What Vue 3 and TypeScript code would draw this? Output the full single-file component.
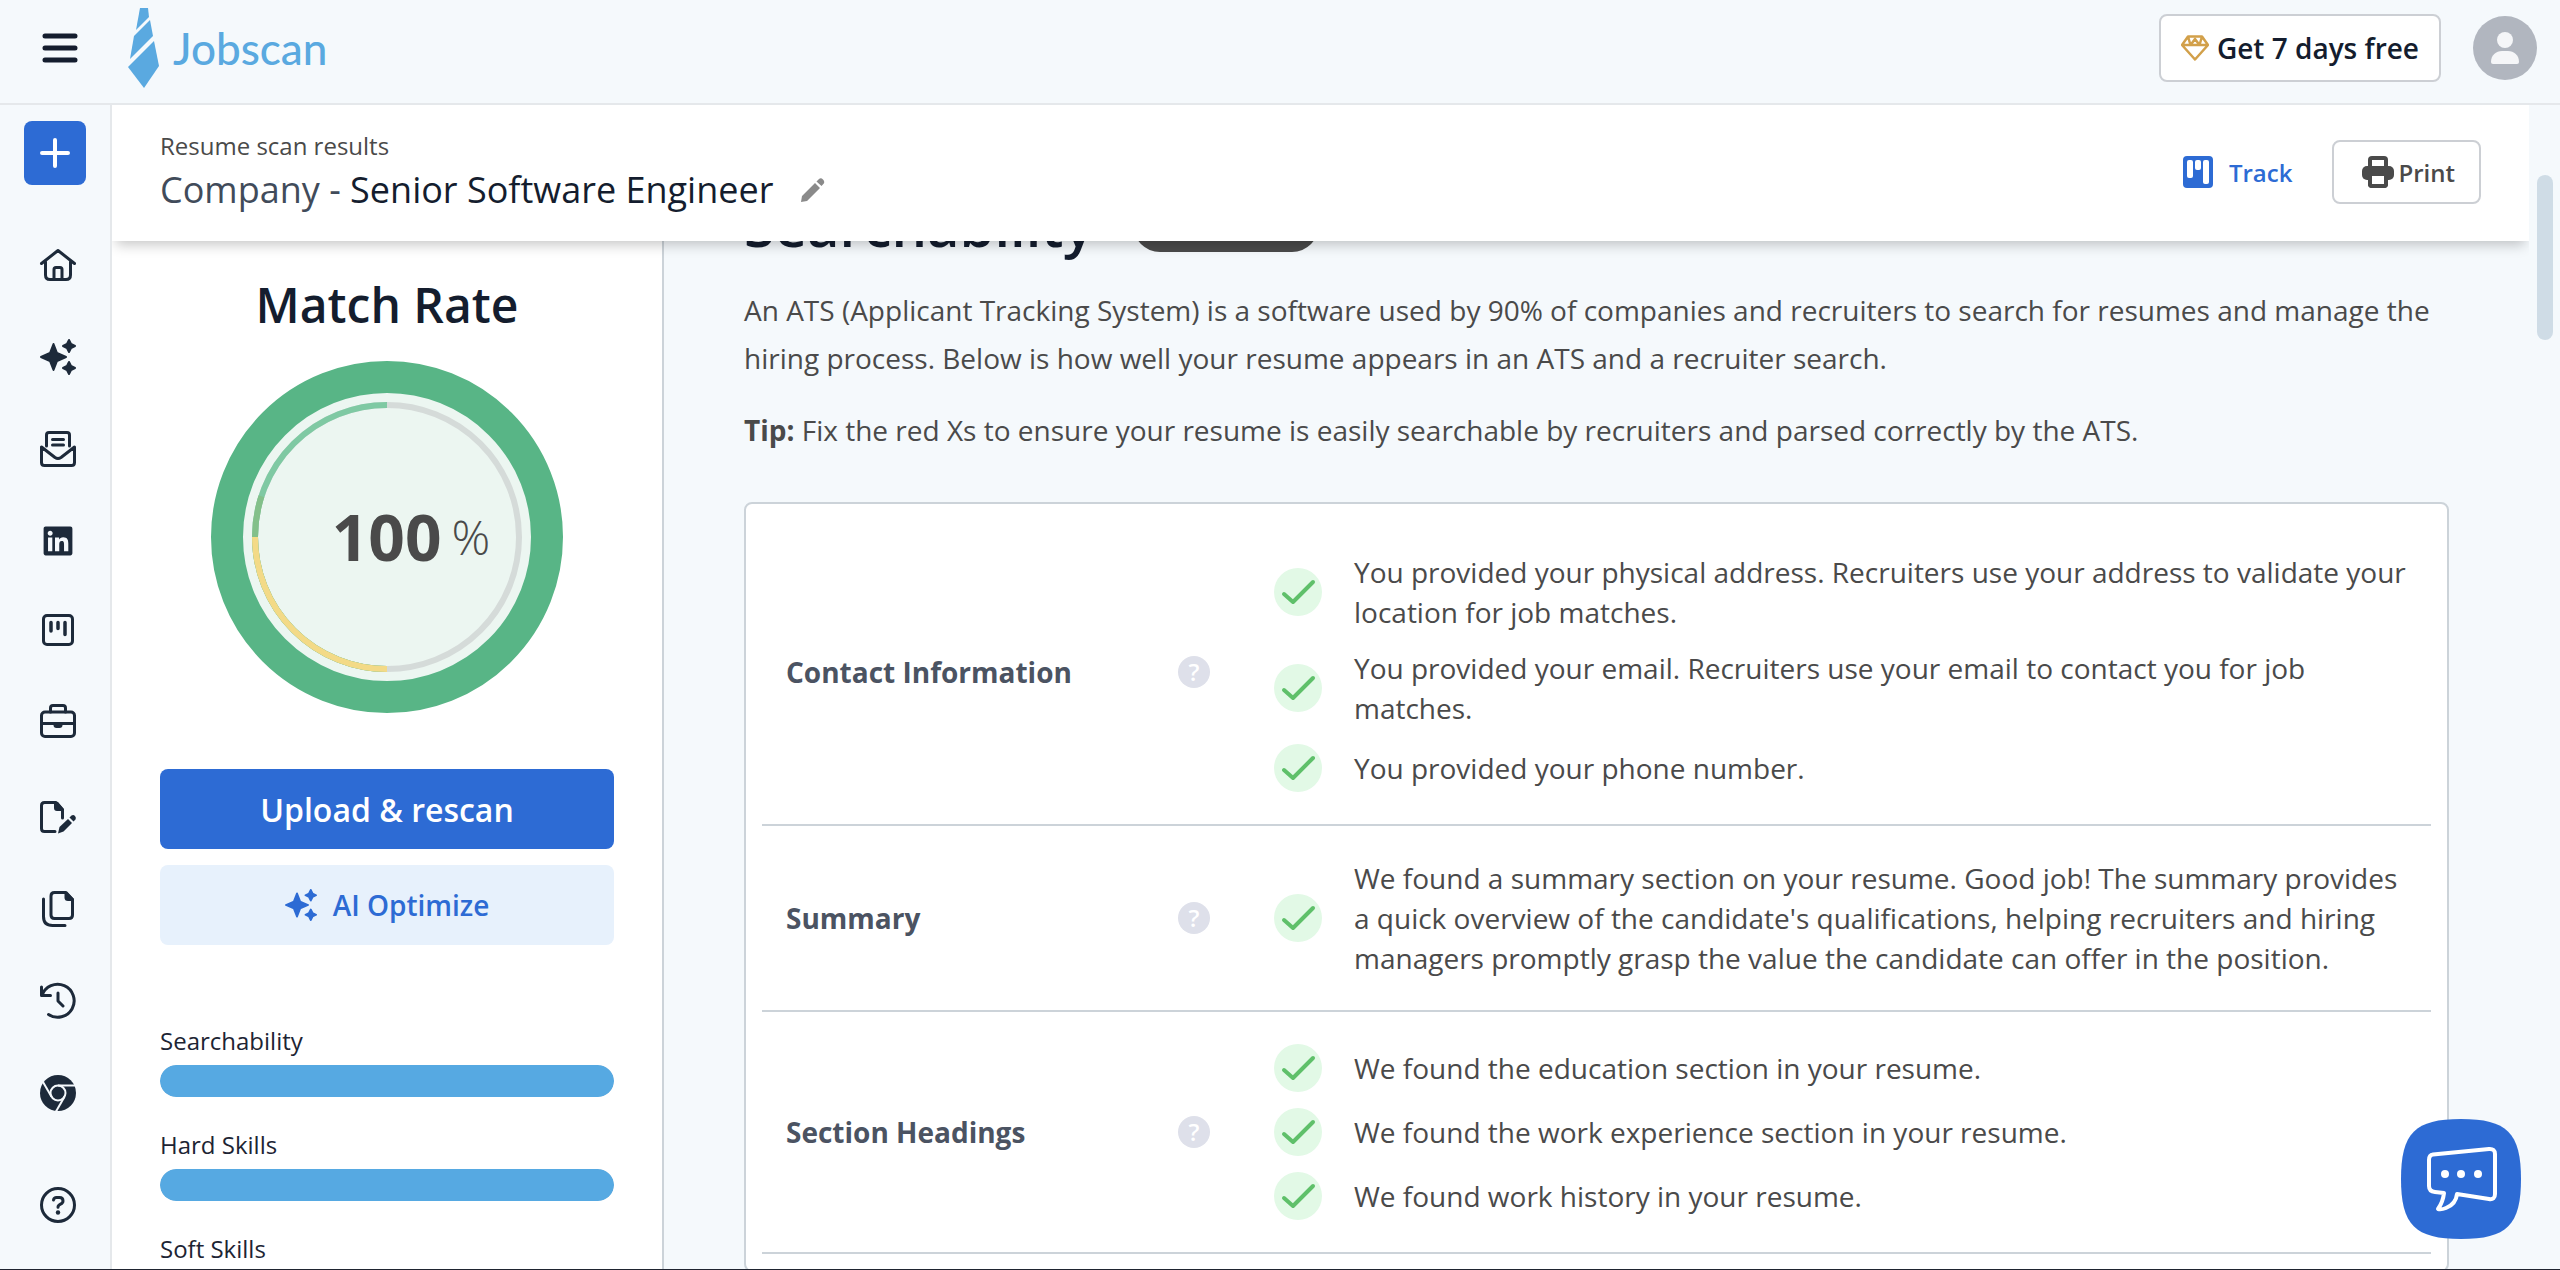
<script setup lang="ts">
interface Section {
  title: string
  findings: string[]
}

interface Skill {
  name: string
  score: number
}

const sections: Section[] = [
  {
    title: 'Contact Information',
    findings: [
      'You provided your physical address. Recruiters use your address to validate your location for job matches.',
      'You provided your email. Recruiters use your email to contact you for job matches.',
      'You provided your phone number.',
    ],
  },
  {
    title: 'Summary',
    findings: [
      "We found a summary section on your resume. Good job! The summary provides a quick overview of the candidate's qualifications, helping recruiters and hiring managers promptly grasp the value the candidate can offer in the position.",
    ],
  },
  {
    title: 'Section Headings',
    findings: [
      'We found the education section in your resume.',
      'We found the work experience section in your resume.',
      'We found work history in your resume.',
    ],
  },
]

const skills: Skill[] = [
  { name: 'Searchability', score: 100 },
  { name: 'Hard Skills', score: 100 },
  { name: 'Soft Skills', score: 100 },
]
</script>

<template>
  <div class="app">
    <header class="topbar">
      <button class="menu" type="button" aria-label="Menu">
        <svg width="36" height="32" viewBox="0 0 36 32"><path d="M3 4h30M3 16h30M3 28h30" stroke="#141d2e" stroke-width="5" stroke-linecap="round" /></svg>
      </button>
      <a class="brand" href="#">
        <svg width="32" height="80" viewBox="0 0 32 80" fill="#5aa9e0">
          <path d="M12 0h8l1 9L8 22z" />
          <path d="M22 12l3 16L2 51 6 28z" />
          <path d="M26 33l5 25-15 22L0 59z" />
        </svg>
        <span>Jobscan</span>
      </a>
      <button class="trial" type="button">
        <svg width="28" height="26" viewBox="0 0 28 26" fill="none" stroke="#d2a04a" stroke-width="2.500" stroke-linejoin="round"><path d="M7 1.500h14l6 8.500-13 14.500L1 10zM1 10h26M7 1.500L9.500 10 14 4l4.500 6L21 1.500" /></svg>
        Get 7 days free
      </button>
      <button class="avatar" type="button" aria-label="Account">
        <svg width="64" height="64" viewBox="0 0 64 64"><circle cx="32" cy="32" r="32" fill="#b1b6bf" /><circle cx="32" cy="24" r="8" fill="#f5f6f8" /><path d="M18 46c0-7 5-11 11-11h6c6 0 11 4 11 11q0 2-2 2H20q-2 0-2-2z" fill="#f5f6f8" /></svg>
      </button>
    </header>

    <div class="body">
      <nav class="rail" aria-label="Main">
        <button class="new-scan" type="button" aria-label="New scan">
          <svg width="32" height="32" viewBox="0 0 32 32"><path d="M16 3v26M3 16h26" stroke="#fff" stroke-width="4" stroke-linecap="round" /></svg>
        </button>
        <a href="#" aria-label="Home">
          <svg viewBox="0 0 36 36"><path d="M1.500 16.500L18 3.500l16.500 13M5.500 14.500V28q0 4.500 4.500 4.500h16q4.500 0 4.500-4.500V14.500M14 32V22.500q0-2 2-2h4q2 0 2 2V32" /></svg>
        </a>
        <a href="#" aria-label="Optimize">
          <svg viewBox="0 0 36 36"><path class="solid" d="M13.500 5l3.500 9 9 4-9 4-3.500 9L10 22l-9-4 9-4zM29 1l2 4 4 2-4 2-2 4-2-4-4-2 4-2zM29 23l2 4 4 2-4 2-2 4-2-4-4-2 4-2z" /></svg>
        </a>
        <a href="#" aria-label="Cover letter">
          <svg viewBox="0 0 36 36"><path d="M6.500 15V4q0-2.500 2.500-2.500h18q2.500 0 2.500 2.500v11M12.500 8.500h11M12.500 14h11M1.500 16v15.500q0 3 3 3h27q3 0 3-3V16L21 26.500q-3 2-6 0z" /></svg>
        </a>
        <a href="#" aria-label="LinkedIn">
          <svg viewBox="-32 -24 512 560"><path class="plain" d="M416 32H31.900C14.300 32 0 46.500 0 64.300v383.400C0 465.500 14.300 480 31.900 480H416c17.600 0 32-14.500 32-32.300V64.300c0-17.800-14.400-32.300-32-32.300zM135.400 416H69V202.200h66.500V416zm-33.200-243c-21.300 0-38.500-17.300-38.500-38.500S80.900 96 102.200 96c21.200 0 38.500 17.300 38.500 38.500 0 21.300-17.200 38.500-38.500 38.500zm282.100 243h-66.400V312c0-24.800-.5-56.700-34.500-56.700-34.600 0-39.900 27-39.900 54.900V416h-66.400V202.200h63.700v29.200h.9c8.900-16.800 30.600-34.500 62.900-34.500 67.200 0 79.700 44.300 79.700 101.900V416z" /></svg>
        </a>
        <a href="#" aria-label="Job tracker">
          <svg viewBox="0 0 36 36"><rect x="3.500" y="0.500" width="29" height="29" rx="3.500" /><path d="M11 7.500v8.500M18 7.500v6M25 7.500v12" stroke-width="3.500" /></svg>
        </a>
        <a href="#" aria-label="Jobs">
          <svg viewBox="0 0 36 36"><rect x="1.500" y="5" width="33" height="24.500" rx="3.500" /><path d="M10.500 5V1q0-2.500 2.500-2.500h10q2.500 0 2.500 2.500v4M1.500 16.500h33" /><path class="plain" d="M13.500 16h9v2q0 3-3 3h-3q-3 0-3-3z" /></svg>
        </a>
        <a href="#" aria-label="Resume editor">
          <svg viewBox="0 0 36 36"><path d="M22.500 19v-8L16 3.500H4.500q-3 0-3 3v23q0 3 3 3H15" /><path class="plain" d="M14 3h4l6 7v2h-7q-3 0-3-3zM18 34.500l1.500-6.500 8.500-8 4 4-8.500 8.500zM29.500 18.500l2-2q2-1 3.500.5t.5 3.500l-2 2z" /></svg>
        </a>
        <a href="#" aria-label="Resumes">
          <svg viewBox="0 0 36 36"><path d="M11 5q0-3.500 3.500-3.500H26l6.500 7V24q0 3.500-3.500 3.500H14.500Q11 27.500 11 24zM3.500 8v17.500q0 9 9 9H25" /><path class="plain" d="M24.500 1H27l7 7v2h-6q-3.500 0-3.500-3.500z" /></svg>
        </a>
        <a href="#" aria-label="Scan history">
          <svg viewBox="0 0 36 36"><path d="M2 12.500A16.500 16.500 0 1 1 8.500 31.500M1.500 4v8.500h9M18 10v8l5 5" /></svg>
        </a>
        <a href="#" aria-label="Chrome extension">
          <svg viewBox="0 0 36 36">
            <circle class="plain" cx="18" cy="18" r="18" />
            <g class="gap">
              <circle cx="18" cy="18" r="7.500" />
              <path d="M18 10.500h17" />
              <path d="M18 10.500h17" transform="rotate(120 18 18)" />
              <path d="M18 10.500h17" transform="rotate(240 18 18)" />
            </g>
          </svg>
        </a>
        <a class="help" href="#" aria-label="Help">
          <svg viewBox="0 0 36 36"><circle cx="18" cy="18" r="16.500" /><path d="M13.500 13q.5-2.500 3-2.500h3q3.500 0 3.500 3.500 0 2-2.500 3.200-2.500 1.300-2.500 3" /><circle class="plain" cx="18" cy="25.500" r="2.200" /></svg>
        </a>
      </nav>

      <div class="page">
        <div class="subheader">
          <div class="heading">
            <p class="kicker">Resume scan results</p>
            <div class="job">
              <h1><span>Company - </span>Senior Software Engineer</h1>
              <button class="edit" type="button" aria-label="Edit title">
                <svg width="24" height="24" viewBox="0 0 24 24" fill="#8a8a8a"><path d="M0 24l1-6L14 5l5 5L6 23zM15.500 3.500L18 1q2-1.500 4 .5t.8 4L20.500 8z" /></svg>
              </button>
            </div>
          </div>
          <a class="track" href="#">
            <svg width="30" height="32" viewBox="0 0 30 32"><rect width="30" height="32" rx="4" fill="#2d6bd4" /><g fill="#fff"><rect x="4" y="4" width="6" height="18" rx="2" /><rect x="12" y="4" width="6" height="10" rx="2" /><rect x="20" y="4" width="6" height="24" rx="2" /></g></svg>
            Track
          </a>
          <button class="print" type="button">
            <svg width="32" height="32" viewBox="0 0 32 32"><rect x="6" width="20" height="32" rx="4" fill="#4a4a4a" /><rect x="10" y="4" width="12" height="8" fill="#fff" /><rect y="10" width="32" height="14" rx="5" fill="#4a4a4a" /><rect x="6" y="18" width="20" height="14" rx="4" fill="#4a4a4a" /><rect x="10" y="20" width="12" height="8" fill="#fff" /></svg>
            Print
          </button>
        </div>

        <div class="columns">
          <aside class="match">
            <h2>Match Rate</h2>
            <div class="gauge">
              <svg width="352" height="352" viewBox="0 0 352 352" fill="none">
                <circle cx="176" cy="176" r="160" fill="#ecf6f1" stroke="#58b586" stroke-width="32" />
                <circle cx="176" cy="176" r="132" stroke="#d5dbd9" stroke-width="6" />
                <g stroke-width="6" transform="rotate(90 176 176)">
                  <circle cx="176" cy="176" r="132" stroke="#7fc9a3" pathLength="100" stroke-dasharray="50 50" />
                  <circle cx="176" cy="176" r="132" stroke="#83c08a" pathLength="100" stroke-dasharray="30 70" />
                  <circle cx="176" cy="176" r="132" stroke="#f3da87" pathLength="100" stroke-dasharray="25 75" />
                </g>
              </svg>
              <p class="rate"><b>100</b><span>%</span></p>
            </div>
            <button class="upload" type="button">Upload &amp; rescan</button>
            <button class="optimize" type="button">
              <svg width="32" height="32" viewBox="0 0 36 36" fill="#2d6bd4" stroke="#2d6bd4" stroke-width="2" stroke-linejoin="round"><path d="M13.500 5l3.500 9 9 4-9 4-3.500 9L10 22l-9-4 9-4zM29 1l2 4 4 2-4 2-2 4-2-4-4-2 4-2zM29 23l2 4 4 2-4 2-2 4-2-4-4-2 4-2z" /></svg>
              AI Optimize
            </button>
            <ul class="skills">
              <li v-for="skill in skills" :key="skill.name">
                <span>{{ skill.name }}</span>
                <div class="bar"><div class="fill" :style="{ width: skill.score + '%' }"></div></div>
              </li>
            </ul>
          </aside>

          <main class="results">
            <div class="results-title">
              <h2>Searchability</h2>
              <span class="badge"></span>
            </div>
            <p>An ATS (Applicant Tracking System) is a software used by 90% of companies and recruiters to search for resumes and manage the hiring process. Below is how well your resume appears in an ATS and a recruiter search.</p>
            <p><b>Tip:</b> Fix the red Xs to ensure your resume is easily searchable by recruiters and parsed correctly by the ATS.</p>
            <div class="card">
              <section v-for="section in sections" :key="section.title" class="row">
                <h3>{{ section.title }}</h3>
                <button class="hint" type="button" :aria-label="'About ' + section.title">?</button>
                <ul>
                  <li v-for="finding in section.findings" :key="finding">
                    <svg width="48" height="48" viewBox="0 0 48 48" fill="none"><circle cx="24" cy="24" r="24" fill="#e2f9e6" /><path d="M10 26l9 8 20-20" stroke="#5fc06a" stroke-width="4" stroke-linecap="round" stroke-linejoin="round" /></svg>
                    <span>{{ finding }}</span>
                  </li>
                </ul>
              </section>
            </div>
          </main>
        </div>
      </div>

      <div class="scroll-gutter"><div class="thumb"></div></div>
    </div>

    <button class="chat" type="button" aria-label="Open chat">
      <svg width="120" height="120" viewBox="0 0 120 120" fill="none">
        <path d="M60 0C106 0 120 14 120 60s-14 60-60 60S0 106 0 60 14 0 60 0z" fill="#2d6bd4" />
        <path d="M32 35.500L88 30q6-.5 6 5v40q0 6-6 5l-32-5q-1 10-11 14-5 2-8 1 5-7 6-16l-9-1q-6-.5-6-6V41q0-5 4-5.500z" stroke="#fff" stroke-width="4" stroke-linejoin="round" />
        <g fill="#fff"><circle cx="44" cy="55" r="4" /><circle cx="60" cy="55" r="4" /><circle cx="77" cy="55" r="4" /></g>
      </svg>
    </button>
  </div>
</template>

<style>
body {
  margin: 0;
  background: #f5f9fc;
}
</style>

<style scoped>
* {
  box-sizing: border-box;
}

h1,
h2,
h3,
p,
ul {
  margin: 0;
  padding: 0;
}

ul {
  list-style: none;
}

button {
  margin: 0;
  padding: 0;
  border: 0;
  background: none;
  font: inherit;
  color: inherit;
  cursor: pointer;
}

a {
  color: inherit;
  text-decoration: none;
}

svg {
  display: block;
  flex: none;
}

.app {
  display: flex;
  flex-direction: column;
  height: 100vh;
  overflow: hidden;
  border-bottom: 1px solid #1f2430;
  font-family: "Open Sans", sans-serif;
  color: #4a4a4a;
}

.topbar {
  display: flex;
  align-items: flex-start;
  flex: none;
  height: 105px;
  padding: 0 23px 0 42px;
  border-bottom: 2px solid #e5e8eb;
}

.menu {
  margin-top: 32px;
}

.brand {
  display: flex;
  align-items: center;
  gap: 13px;
  margin: 8px auto 0 50px;
  font-family: Lato, sans-serif;
  font-size: 44px;
  font-weight: 500;
  color: #5aa9e0;
}

.trial {
  display: flex;
  align-items: center;
  gap: 8px;
  height: 68px;
  margin: 14px 32px 0 0;
  padding: 0 20px;
  border: 2px solid #cccfd4;
  border-radius: 8px;
  background: #fff;
  font-size: 28px;
  font-weight: 600;
  color: #141d2e;
}

.avatar {
  margin-top: 16px;
}

.body {
  display: flex;
  flex: 1;
  min-height: 0;
}

.rail {
  display: flex;
  flex-direction: column;
  align-items: center;
  gap: 56px;
  flex: none;
  width: 112px;
  padding: 16px 0 0 6px;
  border-right: 2px solid #e5e8eb;
}

.new-scan {
  display: grid;
  place-items: center;
  width: 62px;
  height: 64px;
  margin: 0 6px 6px 0;
  border-radius: 8px;
  background: #2d6bd4;
}

.rail a svg {
  width: 36px;
  height: 36px;
  overflow: visible;
  fill: none;
  stroke: #1d2a3a;
  stroke-width: 3;
  stroke-linecap: round;
  stroke-linejoin: round;
}

.rail .solid {
  fill: #1d2a3a;
  stroke-width: 2;
}

.rail .plain {
  fill: #1d2a3a;
  stroke: none;
}

.rail .gap {
  stroke: #f5f9fc;
  stroke-width: 2;
  stroke-linecap: butt;
}

.help {
  margin-top: 20px;
}

.page {
  display: flex;
  flex-direction: column;
  flex: 1;
  min-width: 0;
  overflow: hidden;
}

.subheader {
  position: relative;
  z-index: 1;
  display: flex;
  align-items: center;
  flex: none;
  height: 136px;
  padding: 0 48px 2px;
  background: #fff;
  box-shadow: 0 8px 12px -4px rgba(0, 0, 0, 0.22);
}

.heading {
  flex: 1;
}

.kicker {
  font-size: 24px;
  line-height: 36px;
}

.job {
  display: flex;
  align-items: center;
  gap: 28px;
}

.job h1 {
  font-size: 36px;
  font-weight: 400;
  line-height: 52px;
  color: #141d2e;
}

.job h1 span {
  color: #414b5a;
}

.track {
  display: flex;
  align-items: center;
  gap: 16px;
  margin-right: 40px;
  font-size: 24px;
  font-weight: 600;
  color: #2d6bd4;
}

.print {
  display: flex;
  align-items: center;
  gap: 4px;
  height: 64px;
  padding: 0 24px 0 28px;
  border: 2px solid #cccfd4;
  border-radius: 8px;
  font-size: 24px;
  font-weight: 600;
}

.columns {
  display: flex;
  flex: 1;
  min-height: 0;
}

.match {
  flex: none;
  width: 552px;
  padding: 32px 48px 0;
  border-right: 2px solid #ccd3d9;
  background: #fff;
}

.match h2 {
  font-size: 48px;
  font-weight: 600;
  line-height: 64px;
  text-align: center;
  color: #141d2e;
}

.gauge {
  display: grid;
  justify-items: center;
  align-items: center;
  margin: 24px 0 56px;
}

.gauge > * {
  grid-area: 1 / 1;
}

.rate {
  display: flex;
  align-items: center;
  gap: 10px;
  padding-left: 48px;
}

.rate b {
  font-size: 64px;
  line-height: 80px;
}

.rate span {
  font-size: 48px;
  font-weight: 300;
  line-height: 80px;
}

.upload,
.optimize {
  display: flex;
  align-items: center;
  justify-content: center;
  gap: 16px;
  width: 100%;
  height: 80px;
  border-radius: 8px;
  font-weight: 600;
}

.upload {
  margin-bottom: 16px;
  background: #2d6bd4;
  font-size: 32px;
  color: #fff;
}

.optimize {
  background: #e7f1fc;
  font-size: 28px;
  color: #2d6bd4;
}

.skills {
  display: grid;
  gap: 30px;
  margin-top: 78px;
}

.skills li {
  display: grid;
  gap: 6px;
  font-size: 24px;
  line-height: 36px;
  color: #1d2433;
}

.bar {
  overflow: hidden;
  height: 32px;
  border-radius: 16px;
  background: #e5e8eb;
}

.fill {
  height: 100%;
  border-radius: 16px;
  background: #56a9e2;
}

.results {
  flex: 1;
  min-width: 0;
  padding: 0 80px;
  font-size: 28px;
}

.results-title {
  display: flex;
  align-items: center;
  gap: 40px;
  height: 64px;
  margin: -48px 0 29px;
}

.results-title h2 {
  font-size: 56px;
  font-weight: 600;
  line-height: 60px;
  color: #141d2e;
}

.badge {
  width: 186px;
  height: 54px;
  border-radius: 27px;
  background: #4a4a4a;
}

.results p {
  margin-bottom: 24px;
  line-height: 48px;
}

.card {
  margin-top: 48px;
  padding: 16px;
  border: 2px solid #ccd3d9;
  border-radius: 8px;
  background: #fff;
}

.row {
  display: flex;
  align-items: center;
  padding: 32px 16px 32px 24px;
  border-bottom: 2px solid #ccd3d9;
}

.row h3 {
  width: 392px;
  font-size: 28px;
  font-weight: 700;
  line-height: 40px;
  color: #4b5362;
}

.hint {
  flex: none;
  width: 32px;
  height: 32px;
  margin-right: 64px;
  border-radius: 16px;
  background: #dee0ea;
  font-size: 24px;
  font-weight: 600;
  line-height: 32px;
  color: #fff;
}

.row ul {
  display: grid;
  flex: 1;
  gap: 16px;
}

.row li {
  display: flex;
  align-items: center;
  gap: 32px;
  line-height: 40px;
}

.scroll-gutter {
  flex: none;
  width: 31px;
  padding: 70px 7px 0 8px;
}

.thumb {
  height: 165px;
  border-radius: 8px;
  background: #cfdce6;
}

.chat {
  position: fixed;
  right: 39px;
  bottom: 31px;
  z-index: 2;
}
</style>
